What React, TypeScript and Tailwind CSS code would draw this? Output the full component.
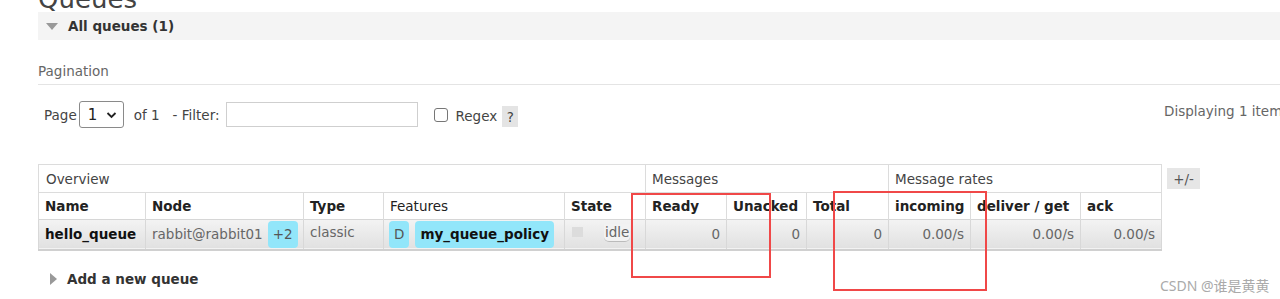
import React from "react";

// queue row shown in the overview table
const queue = {
  name: "hello_queue",
  node: "rabbit@rabbit01",
  extraNodes: "+2",
  type: "classic",
  state: "idle",
  ready: "0",
  unacked: "0",
  total: "0",
  incoming: "0.00/s",
  deliver: "0.00/s",
  ack: "0.00/s",
};

const colWidths = [107, 158, 80, 181, 81, 81, 80, 82, 82, 110, 81];

const App: React.FC = () => {
  return (
    <div
      className="relative w-[1280px] h-[299px] overflow-hidden bg-white text-[13.5px] text-[#333]"
      style={{ fontFamily: '"DejaVu Sans", Verdana, sans-serif' }}
    >
      <div className="w-[1340px] pl-[38px]">
        <h1 className="-mt-[13px] text-[26px] leading-[25px] text-[#444]">Queues</h1>

        {/* All queues section header */}
        <div className="flex h-[28px] items-center bg-[#f4f4f4] pl-[8px]">
          <span className="mr-[10px] h-0 w-0 border-x-[6px] border-t-[7px] border-x-transparent border-t-[#999]" />
          <span className="font-bold text-[#333]">All queues (1)</span>
        </div>

        {/* Pagination */}
        <div className="mt-[21px] border-b border-[#e4e4e4] pb-[3px] text-[#666]">Pagination</div>

        <div className="mt-[16px] grid grid-cols-[1126px_auto] items-center">
          <div className="flex items-center pl-[6px] text-[#444]">
            <span>Page</span>
            <div className="ml-[2px] flex h-[27px] w-[45px] items-center justify-between rounded-[3px] border border-[#8a8a8a] bg-white pl-[8px] pr-[6px] text-[15px] text-[#222]">
              <span>1</span>
              <svg width="11" height="8" viewBox="0 0 11 8">
                <path d="M1.5 2 L5.5 6 L9.5 2" fill="none" stroke="#222" strokeWidth="1.8" />
              </svg>
            </div>
            <span className="ml-[10px]">of 1</span>
            <span className="ml-[13px]">- Filter:</span>
            <div className="ml-[6px] h-[25px] w-[192px] border border-[#cfcfcf] bg-white" />
            <span className="ml-[16px] h-[14px] w-[14px] rounded-[3px] border border-[#767676] bg-white" />
            <span className="ml-[8px] mt-[3px]">Regex</span>
            <span className="ml-[5px] mt-[4px] flex h-[21px] w-[16px] items-center justify-center bg-[#e4e4e4] text-[#444]">?</span>
          </div>
          <div className="-mt-[8px] whitespace-nowrap text-[#666]">Displaying 1 item , page size up to:</div>
        </div>

        {/* Queues table */}
        <div className="mt-[36px] flex items-start">
          <table className="table-fixed border-collapse border border-[#dcdcdc]" style={{ width: 1123 }}>
            <colgroup>
              {colWidths.map((w, i) => (
                <col key={i} style={{ width: w }} />
              ))}
            </colgroup>
            <thead>
              <tr className="h-[28px] text-[#444]">
                <th colSpan={5} className="border border-[#dcdcdc] pl-[7px] text-left font-normal">Overview</th>
                <th colSpan={3} className="border border-[#dcdcdc] pl-[6px] text-left font-normal">Messages</th>
                <th colSpan={3} className="border border-[#dcdcdc] pl-[6px] text-left font-normal">Message rates</th>
              </tr>
              <tr className="h-[27px] border-b border-[#d6d6d6] text-[#222]">
                {["Name", "Node", "Type", "Features", "State", "Ready", "Unacked", "Total", "incoming", "deliver / get", "ack"].map((h, i) => (
                  <th
                    key={h}
                    className={`border-x border-[#dcdcdc] pl-[6px] text-left whitespace-nowrap ${i === 3 ? "font-normal" : "font-bold"}`}
                  >
                    {h}
                  </th>
                ))}
              </tr>
            </thead>
            <tbody>
              <tr className="h-[30px] border-b-2 border-[#d0d0d0] bg-gradient-to-b from-[#f3f3f3] to-[#e1e1e1] text-[#666]">
                <td className="border-x border-[#d8d8d8] pl-[6px] font-bold text-[#111]">{queue.name}</td>
                <td className="border-x border-[#d8d8d8] pl-[6px] whitespace-nowrap">
                  {queue.node}
                  <span className="ml-[5px] inline-block rounded-[4px] bg-[#92e6fa] px-[5px] py-[3px] text-[#555]">{queue.extraNodes}</span>
                </td>
                <td className="border-x border-[#d8d8d8] pl-[6px]">
                  <span className="-mt-[4px] block">{queue.type}</span>
                </td>
                <td className="border-x border-[#d8d8d8] pl-[5px] whitespace-nowrap">
                  <span className="inline-block rounded-[4px] bg-[#92e6fa] px-[5px] py-[3px] text-[#555]">D</span>
                  <span className="ml-[6px] inline-block rounded-[4px] bg-[#92e6fa] px-[5px] py-[3px] font-bold text-[#111]">my_queue_policy</span>
                </td>
                <td className="border-x border-[#d8d8d8] pl-[7px]">
                  <div className="flex items-center">
                    <span className="-mt-[6px] h-[10px] w-[11px] bg-[#dcdcdc]" />
                    <span className="-mt-[4px] ml-[21px] rounded-b-[5px] border-b border-[#bbb] bg-[#f2f2f2] px-[1px] leading-[17px] text-[#666]">{queue.state}</span>
                  </div>
                </td>
                {[queue.ready, queue.unacked, queue.total, queue.incoming, queue.deliver, queue.ack].map((v, i) => (
                  <td key={i} className="border-x border-[#d8d8d8] pr-[6px] text-right">{v}</td>
                ))}
              </tr>
            </tbody>
          </table>
          <span className="ml-[5px] mt-[4px] flex h-[21px] w-[33px] items-center justify-center bg-[#e6e6e6] text-[#555]">+/-</span>
        </div>

        {/* Add a new queue */}
        <div className="mt-[18px] flex items-center pl-[12px]">
          <span className="mr-[10px] h-0 w-0 border-y-[6px] border-l-[7px] border-y-transparent border-l-[#999]" />
          <span className="font-bold text-[#333]">Add a new queue</span>
        </div>
      </div>

      {/* red highlight boxes drawn over the table */}
      <div className="absolute left-[631px] top-[193px] h-[85px] w-[140px] border-2 border-[#f04848]" />
      <div className="absolute left-[833px] top-[191px] h-[100px] w-[154px] border-2 border-[#f04848]" />

      {/* watermark */}
      <div
        className="absolute left-[1160px] top-[275px] text-[14px] text-[#aaa]"
        style={{ fontFamily: '"Noto Sans", "Noto Sans CJK SC", sans-serif' }}
      >
        CSDN @谁是黄黄
      </div>
    </div>
  );
};

export default App;
